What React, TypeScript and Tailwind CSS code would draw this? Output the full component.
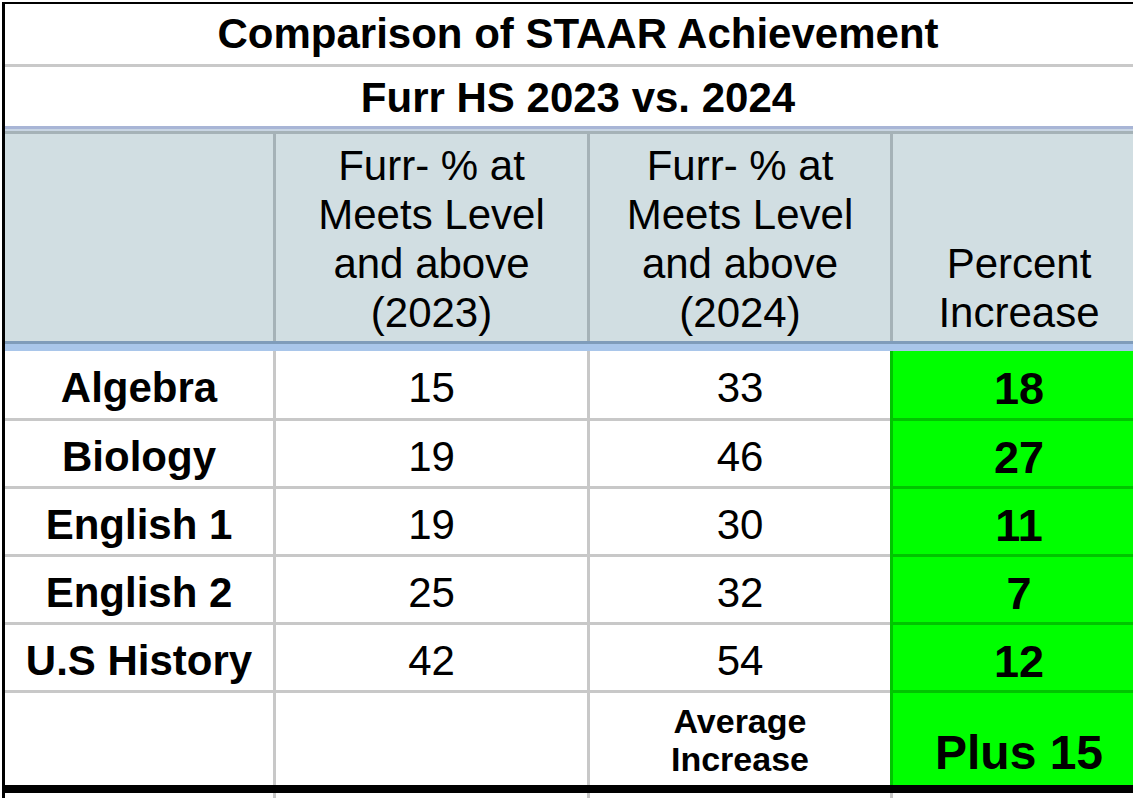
import React from 'react';

interface ScoreRow {
  subject: string;
  y2023: number;
  y2024: number;
  increase: number;
  first?: boolean;
}

const rows: ScoreRow[] = [
  { subject: 'Algebra', y2023: 15, y2024: 33, increase: 18, first: true },
  { subject: 'Biology', y2023: 19, y2024: 46, increase: 27 },
  { subject: 'English 1', y2023: 19, y2024: 30, increase: 11 },
  { subject: 'English 2', y2023: 25, y2024: 32, increase: 7 },
  { subject: 'U.S History', y2023: 42, y2024: 54, increase: 12 },
];

const App: React.FC = () => {
  return (
    <div className="w-[1133px] h-[798px] overflow-hidden bg-white pl-[2px] pt-[2px] text-black font-['Liberation_Sans',Arial,sans-serif]">
      <div className="w-[1143px] border-l-[3px] border-t-[2px] border-black">
        {/* titles */}
        <div className="h-[63px] border-b-[3px] border-[#c9c9c9] flex items-center justify-center pl-[6px] text-[42px] font-bold leading-none">
          Comparison of STAAR Achievement
        </div>
        <div className="h-[59px] flex items-center justify-center pl-[6px] pt-[2px] text-[42px] font-bold leading-none">
          Furr HS 2023 vs. 2024
        </div>
        <div className="h-[3px] bg-[#a8b5d6]" />
        <div className="h-[2px] bg-[#c8d5e3]" />
        <div className="h-[3px] bg-[#a5b2b7]" />

        {/* header */}
        <div className="flex h-[207px] bg-[#d1dee2] text-[42px] leading-[49px] text-center">
          <div className="w-[271px] border-r-[3px] border-[#a5b2b7]" />
          <div className="w-[314px] border-r-[3px] border-[#a5b2b7] flex flex-col justify-end pb-[4px]">
            <span>Furr- % at</span>
            <span>Meets Level</span>
            <span>and above</span>
            <span>(2023)</span>
          </div>
          <div className="w-[300px] flex flex-col justify-end pb-[4px]">
            <span>Furr- % at</span>
            <span>Meets Level</span>
            <span>and above</span>
            <span>(2024)</span>
          </div>
          <div className="flex-1 border-l-[3px] border-[#a5b2b7] flex flex-col justify-end pb-[4px]">
            <span>Percent</span>
            <span>Increase</span>
          </div>
        </div>
        <div className="h-[3px] bg-[#7f9cba]" />
        <div className="h-[7px] bg-[#a9c6ea]" />

        {/* body */}
        {rows.map((row) => (
          <div key={row.subject} className={`flex ${row.first ? 'h-[70px]' : 'h-[68px]'} text-[42px] leading-none`}>
            <div className="w-[271px] border-r-[3px] border-b-[3px] border-[#c8c8c8] flex items-center justify-center pt-[7px] font-bold">
              {row.subject}
            </div>
            <div className="w-[314px] border-r-[3px] border-b-[3px] border-[#c8c8c8] flex items-center justify-center pt-[7px]">
              {row.y2023}
            </div>
            <div className="w-[300px] border-b-[3px] border-[#c8c8c8] flex items-center justify-center pt-[7px]">
              {row.y2024}
            </div>
            <div className="flex-1 bg-[#00ff00] border-l-[3px] border-b-[3px] border-[#00c400] flex items-center justify-center pt-[8px] text-[45px] font-bold">
              {row.increase}
            </div>
          </div>
        ))}

        <div className="flex h-[92px]">
          <div className="w-[271px] border-r-[3px] border-[#c8c8c8]" />
          <div className="w-[314px] border-r-[3px] border-[#c8c8c8]" />
          <div className="w-[300px] flex flex-col items-center justify-center text-[34px] leading-[38px] font-bold pt-[2px]">
            <span>Average</span>
            <span>Increase</span>
          </div>
          <div className="flex-1 bg-[#00ff00] border-l-[3px] border-[#00c400] flex items-end justify-center pb-[8px] text-[48px] leading-none font-bold">
            Plus 15
          </div>
        </div>
        <div className="h-[8px] bg-black" />
        <div className="flex h-[5px]">
          <div className="w-[271px] border-r-[3px] border-[#c8c8c8]" />
          <div className="w-[314px] border-r-[3px] border-[#c8c8c8]" />
          <div className="w-[300px]" />
          <div className="flex-1 border-l-[3px] border-[#c8c8c8]" />
        </div>
      </div>
    </div>
  );
};

export default App;
